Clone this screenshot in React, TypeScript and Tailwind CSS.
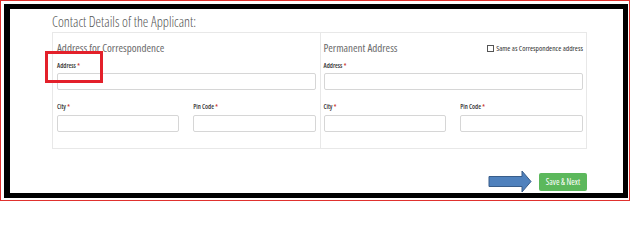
import React from "react";

const Label = ({ text }: { text: string }) => (
  <div className="h-[9px] text-[6.5px] leading-[9px] font-semibold text-[#333] [font-stretch:75%]">
    {text} <span className="text-[#c9302c]">*</span>
  </div>
);

const Input = () => <div className="h-[17px] rounded-[2px] border border-[#d6d6d6] bg-white" />;

function AddressColumn({ title, extra }: { title: string; extra?: React.ReactNode }) {
  return (
    <div className="flex flex-col">
      <div className="flex h-[22px] items-end justify-between">
        <span className="text-[11px] leading-[15px] text-[#6b6b6b] [font-stretch:75%]">{title}</span>
        {extra}
      </div>
      <div className="mt-[6px]">
        <Label text="Address" />
      </div>
      <div className="mt-[3px]">
        <Input />
      </div>
      <div className="mt-[12px] grid grid-cols-2 gap-[14px]">
        <div>
          <Label text="City" />
          <div className="mt-[4px]">
            <Input />
          </div>
        </div>
        <div>
          <Label text="Pin Code" />
          <div className="mt-[4px]">
            <Input />
          </div>
        </div>
      </div>
    </div>
  );
}

export default function App() {
  return (
    <div className="relative h-[201px] w-[630px] overflow-hidden border border-[#e0312e] bg-white pl-[3px] pr-[1px] pt-[3px] pb-[2px] font-['Open_Sans',sans-serif]">
      <div className="flex h-full flex-col border-b-[5px] border-l-[6px] border-r-[5px] border-t-[5px] border-black bg-white pl-[42px] pr-[36px]">
        {/* Title */}
        <h2 className="mt-[2px] h-[21px] text-[14px] leading-[21px] font-light text-[#555] [font-stretch:75%]">
          Contact Details of the Applicant:
        </h2>

        {/* Address panel */}
        <div className="grid h-[119px] grid-cols-2 border border-[#e8e8e8]">
          <div className="px-[4px]">
            <AddressColumn title="Address for Correspondence" />
          </div>
          <div className="border-l border-[#e8e8e8] px-[3px]">
            <AddressColumn
              title="Permanent Address"
              extra={
                <label className="mb-[2px] flex items-center gap-[2px] text-[7.5px] leading-[9px] text-[#333] [font-stretch:75%]">
                  <span className="h-[7px] w-[7px] border border-[#555] bg-white" />
                  Same as Correspondence address
                </label>
              }
            />
          </div>
        </div>

        {/* Actions */}
        <div className="mt-[21px] flex items-center justify-end gap-[7px]">
          <svg width="44" height="23" viewBox="0 0 44 23">
            <path
              d="M1 6.5 H34 V1 L43 11.5 L34 22 V16.5 H1 Z"
              fill="#4f81bd"
              stroke="#385d8a"
              strokeWidth="1"
            />
          </svg>
          <button className="h-[18px] w-[48px] rounded-[2px] bg-[#5cb85c] text-[8.5px] leading-[18px] text-white [font-stretch:75%]">
            Save &amp; Next
          </button>
        </div>
      </div>

      {/* Red highlight overlay */}
      <div className="absolute left-[44px] top-[50px] h-[32px] w-[58px] border-[3px] border-[#e3202a]" />
    </div>
  );
}
